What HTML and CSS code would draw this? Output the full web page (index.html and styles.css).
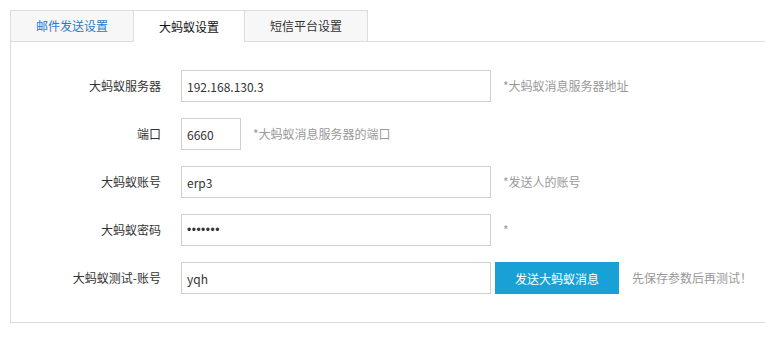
FILE: index.html
```html
<!DOCTYPE html>
<html lang="zh-CN">
<head>
<meta charset="utf-8">
<title>大蚂蚁设置</title>
<link rel="stylesheet" href="styles.css">
</head>
<body>
<div class="wrap">
  <div class="tabs">
    <div class="tab tab-first">邮件发送设置</div>
    <div class="tab tab-active">大蚂蚁设置</div>
    <div class="tab tab-last">短信平台设置</div>
  </div>
  <div class="panel">
    <div class="row">
      <label class="label">大蚂蚁服务器</label>
      <input class="field" type="text" value="192.168.130.3">
      <span class="hint">*大蚂蚁消息服务器地址</span>
    </div>
    <div class="row">
      <label class="label">端口</label>
      <input class="field field-short" type="text" value="6660">
      <span class="hint">*大蚂蚁消息服务器的端口</span>
    </div>
    <div class="row">
      <label class="label">大蚂蚁账号</label>
      <input class="field" type="text" value="erp3">
      <span class="hint">*发送人的账号</span>
    </div>
    <div class="row">
      <label class="label">大蚂蚁密码</label>
      <input class="field field-pass" type="password" value="1234567">
      <span class="hint">*</span>
    </div>
    <div class="row">
      <label class="label">大蚂蚁测试-账号</label>
      <input class="field" type="text" value="yqh">
      <button class="btn" type="button">发送大蚂蚁消息</button>
      <span class="hint hint-btn">先保存参数后再测试！</span>
    </div>
  </div>
</div>
</body>
</html>
```
FILE: styles.css
```css
html, body {
  margin: 0;
  padding: 0;
  background: #fff;
  overflow: hidden;
}
body {
  font-family: "Noto Sans CJK SC", "Noto Sans", sans-serif;
  font-size: 12px;
  color: #333;
}
.wrap {
  padding: 10px 0 0 10px;
}
.tabs {
  display: flex;
  height: 31px;
}
.tab {
  box-sizing: border-box;
  height: 31px;
  border-top: 1px solid #dcdcdc;
  border-right: 1px solid #dcdcdc;
  background: #f7f7f7;
  color: #333;
  display: flex;
  align-items: center;
  justify-content: center;
  line-height: 16px;
  font-size: 12px;
}
.tab-first {
  width: 124px;
  border-left: 1px solid #dcdcdc;
  color: #2a7ac6;
}
.tab-active {
  width: 111px;
  background: #fff;
  color: #111;
  position: relative;
  z-index: 1;
  height: 32px;
}
.tab-last {
  width: 123px;
}
.panel {
  border: 1px solid #dcdcdc;
  border-right: none;
  padding: 28px 0 28px 0;
  display: flex;
  flex-direction: column;
  gap: 16px;
}
.row {
  display: flex;
  align-items: center;
  height: 32px;
}
.label {
  width: 150px;
  margin-right: 20px;
  text-align: right;
  color: #333;
  line-height: 16px;
}
.field {
  box-sizing: border-box;
  width: 310px;
  height: 32px;
  border: 1px solid #cfcfcf;
  padding: 0 5px;
  margin: 0;
  font-family: "Noto Sans CJK SC", "Noto Sans", sans-serif;
  font-size: 12px;
  color: #333;
  outline: none;
  background: #fff;
}
.field-short {
  width: 60px;
}
.field-pass {
  font-family: "Liberation Sans", sans-serif;
  font-size: 12px;
  letter-spacing: 0.5px;
}
.hint {
  margin-left: 12px;
  color: #999;
  line-height: 16px;
}
.btn {
  box-sizing: border-box;
  margin-left: 4px;
  width: 124px;
  height: 32px;
  border: none;
  background: #19a1d6;
  color: #fff;
  font-family: "Noto Sans CJK SC", "Noto Sans", sans-serif;
  font-size: 12px;
  padding: 0;
  cursor: pointer;
}
.hint-btn {
  margin-left: 13px;
}
```
